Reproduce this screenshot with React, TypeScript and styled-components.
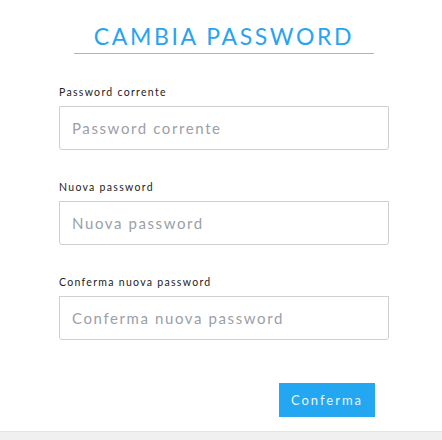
import styled, { createGlobalStyle } from 'styled-components';

const Colors = {
	accent: '#22a7f0',
	title: '#2aa3ef',
	rule: '#b3b3b3',
	border: '#cfcfcf',
	label: '#222',
	placeholder: '#9aa0a8',
	footer: '#f0f0f0',
} as const;

const GlobalStyle = createGlobalStyle`
	html, body {
		margin: 0;
		padding: 0;
		background: #fff;
		font-family: Lato, "Open Sans", sans-serif;
	}
`;

const Page = styled.div`
	width: 442px;
	height: 440px;
	display: flex;
	flex-direction: column;
	overflow: hidden;
`;

const Content = styled.div`
	flex: 1;
	padding: 21px 0 0 59px;
`;

const Title = styled.h1`
	margin: 0 0 0 15px;
	width: 300px;
	height: 32px;
	text-align: center;
	font-weight: 400;
	font-size: 23px;
	line-height: 30px;
	letter-spacing: 2.6px;
	color: ${Colors.title};
	border-bottom: 1px solid ${Colors.rule};
`;

const Form = styled.form`
	width: 330px;
	margin-top: 31px;
	display: flex;
	flex-direction: column;
`;

const Field = styled.div`
	display: flex;
	flex-direction: column;
	gap: 7px;
	margin-bottom: 30px;
`;

const Label = styled.label`
	font-size: 10.5px;
	line-height: 14px;
	letter-spacing: 1.3px;
	color: ${Colors.label};
`;

const Input = styled.input`
	box-sizing: border-box;
	width: 330px;
	height: 44px;
	padding: 0 12px;
	border: 1px solid ${Colors.border};
	border-radius: 0 0 3px 3px;
	font-family: inherit;
	font-size: 15px;
	letter-spacing: 1.6px;
	outline: none;

	&::placeholder {
		color: ${Colors.placeholder};
	}
`;

const Actions = styled.div`
	display: flex;
	justify-content: flex-end;
	padding: 13px 14px 0 0;
`;

const Button = styled.button`
	width: 96px;
	height: 34px;
	padding: 0;
	border: 0;
	background: ${Colors.accent};
	color: #eaf6ff;
	font-family: inherit;
	font-size: 13px;
	letter-spacing: 2px;
	cursor: pointer;
`;

const Footer = styled.div`
	height: 8px;
	background: ${Colors.footer};
	border-top: 1px solid #e4e4e4;
`;

const fields = [
	{ id: 'current', label: 'Password corrente' },
	{ id: 'new', label: 'Nuova password' },
	{ id: 'confirm', label: 'Conferma nuova password' },
];

export default function App() {
	return (
		<Page>
			<GlobalStyle />
			<Content>
				<Title>CAMBIA PASSWORD</Title>
				<Form onSubmit={(e) => e.preventDefault()}>
					{fields.map((f) => (
						<Field key={f.id}>
							<Label htmlFor={f.id}>{f.label}</Label>
							<Input id={f.id} type="password" placeholder={f.label} />
						</Field>
					))}
					<Actions>
						<Button type="submit">Conferma</Button>
					</Actions>
				</Form>
			</Content>
			<Footer />
		</Page>
	);
}
